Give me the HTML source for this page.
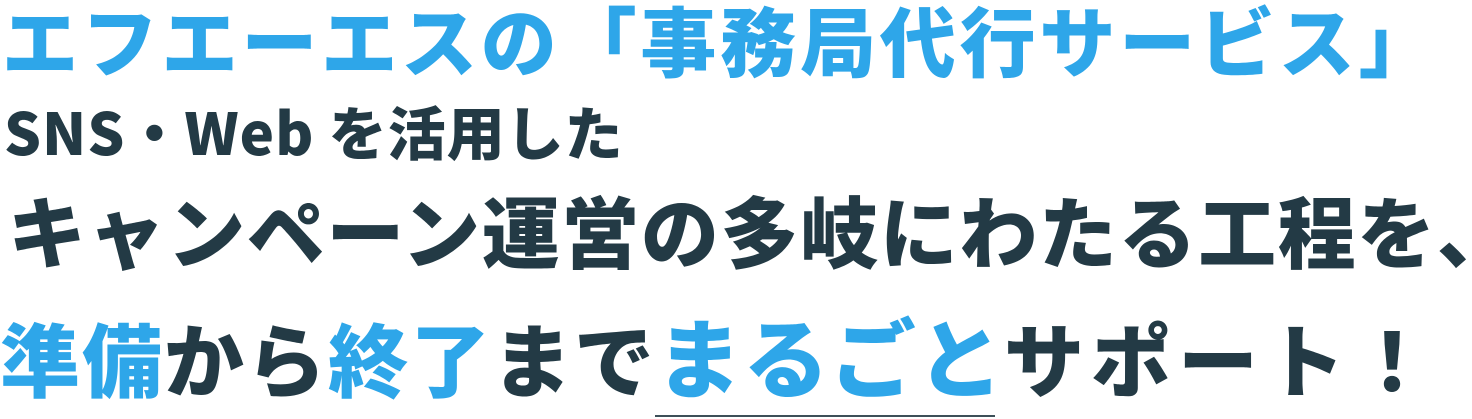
<!DOCTYPE html>
<html><head><meta charset="utf-8"><style>
html,body{margin:0;padding:0;background:#fff;width:1472px;height:419px;overflow:hidden;position:relative}
div.l{position:absolute;left:0;white-space:nowrap;line-height:1;font-family:"Noto Sans CJK JP",sans-serif;font-weight:900;color:#233a45}
div.l .b,div.l.b{color:#2ea6e9}
</style></head><body>
<div class="l b" style="top:0px;left:2px;font-size:76px;letter-spacing:3.8px">エフエーエスの「事務局代行サービス」</div>
<div class="l" style="top:101px;left:4px;font-size:58px;letter-spacing:1px">SNS・Web を活用した</div>
<div class="l" style="top:190px;left:8px;font-size:78px;letter-spacing:1.6px">キャンペーン運営の多岐にわたる工程を、</div>
<div class="l" style="top:311px;left:0px;font-size:80px;letter-spacing:2px"><span class="b">準備</span>から<span class="b">終了</span>まで<span class="b" style="font-size:86px;letter-spacing:1px">まるごと</span><span style="letter-spacing:7px">サポート！</span></div>
<div style="position:absolute;left:655px;top:415px;width:340px;height:2px;background:#3d4f58"></div>
</body></html>
